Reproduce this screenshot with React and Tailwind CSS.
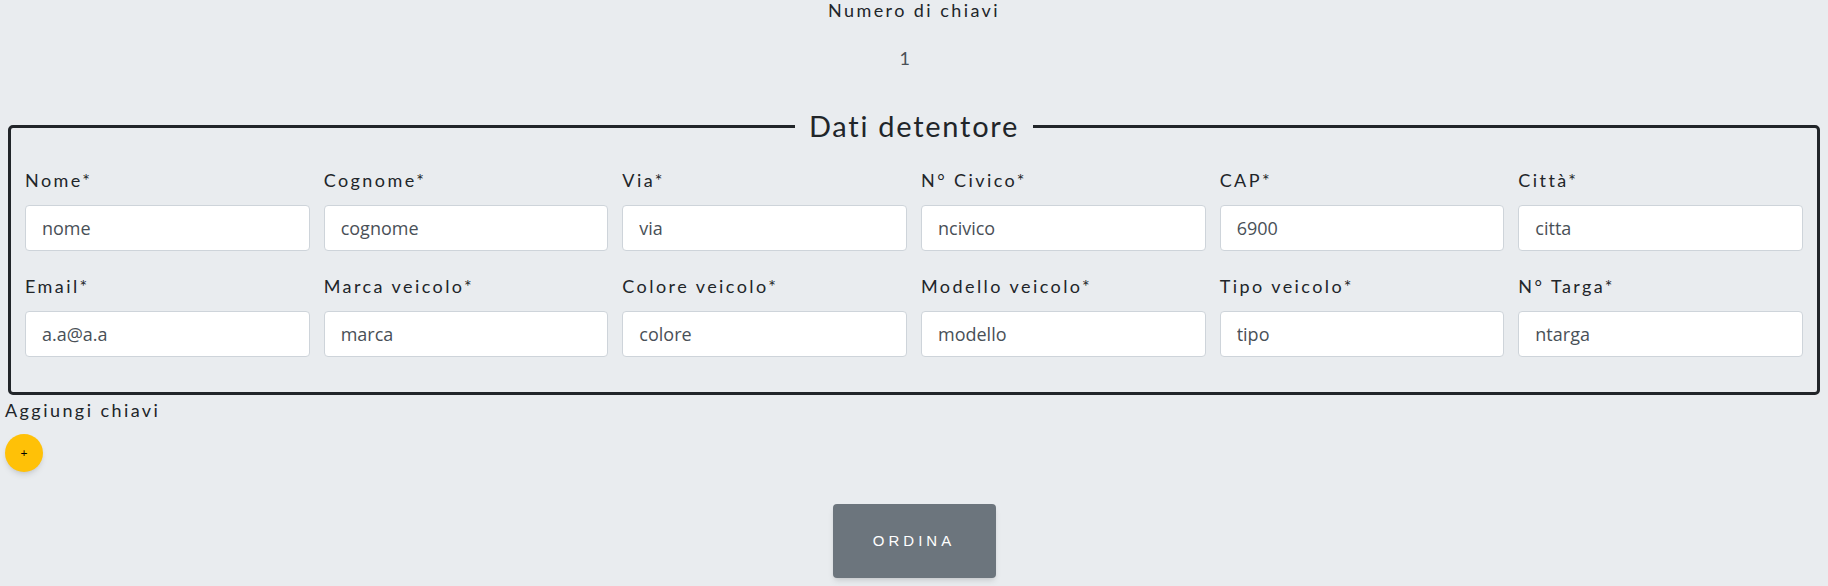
import {useState} from 'react'

const fields = [
    {label: 'Nome*', value: 'nome'},
    {label: 'Cognome*', value: 'cognome'},
    {label: 'Via*', value: 'via'},
    {label: 'N° Civico*', value: 'ncivico'},
    {label: 'CAP*', value: '6900'},
    {label: 'Città*', value: 'citta'},
    {label: 'Email*', value: 'a.a@a.a'},
    {label: 'Marca veicolo*', value: 'marca'},
    {label: 'Colore veicolo*', value: 'colore'},
    {label: 'Modello veicolo*', value: 'modello'},
    {label: 'Tipo veicolo*', value: 'tipo'},
    {label: 'N° Targa*', value: 'ntarga'},
]

function Field ({label, value}) {
    const [val, setVal] = useState(value)
    return (
        <div>
            <label className="block leading-[24px] mb-[13px]">{label}</label>
            <input
                value={val}
                onChange={(e) => setVal(e.target.value)}
                className="block w-full h-[46px] px-[16px] bg-white border border-[#ced4da] rounded-[4px] text-[18px] text-[#495057] tracking-normal outline-none"
                style={{fontFamily: '"Open Sans", sans-serif'}}
            />
        </div>
    )
}

function App () {
    const [keys, setKeys] = useState(1)

    return (
        <div className="min-h-screen bg-[#e9ecef] text-[#212529] text-[18px] tracking-[0.135em] font-['Lato',sans-serif]">
            <div className="text-center">
                <p className="leading-[20px]">Numero di chiavi</p>
                <p className="mt-[28px] leading-[20px] text-[#495057] pr-[16px]">{keys}</p>
            </div>

            <fieldset className="mx-2 mt-[40px] border-[3px] border-[#212529] rounded-[5px] px-[14px] pb-[35px]">
                <legend className="mx-auto px-[14px] text-[29px] leading-[36px] tracking-[0.06em]">Dati detentore</legend>
                <div className="grid grid-cols-6 gap-x-[14px] gap-y-[23px] pt-[24px]">
                    {fields.map((f) => (
                        <Field key={f.label} label={f.label} value={f.value}/>
                    ))}
                </div>
            </fieldset>

            <p className="ml-[5px] mt-[3px] leading-[24px]">Aggiungi chiavi</p>
            <button
                onClick={() => setKeys(keys + 1)}
                className="ml-[5px] mt-[12px] w-[38px] h-[38px] rounded-full bg-[#ffc107] shadow-md flex items-center justify-center text-[12px] leading-none text-black tracking-normal"
            >+</button>

            <div className="flex justify-center mt-[32px]">
                <button className="w-[163px] h-[74px] rounded-[4px] bg-[#6c757d] text-white text-[15px] tracking-[4px] shadow-md font-['Liberation_Sans',sans-serif]">
                    ORDINA
                </button>
            </div>
        </div>
    )
}

export default App
